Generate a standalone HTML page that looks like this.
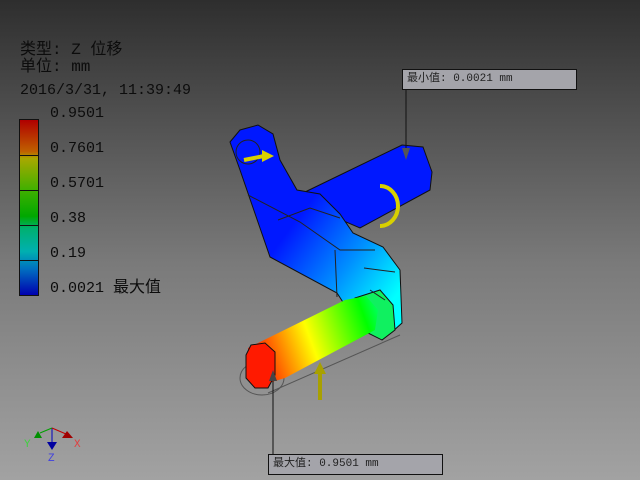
<!DOCTYPE html>
<html><head><meta charset="utf-8"><style>
html,body{margin:0;padding:0}
body{width:640px;height:480px;overflow:hidden;background:linear-gradient(#2e2e2e 0%,#4a4a4a 20%,#7a7a7a 55%,#a2a2a2 100%);position:relative;font-family:"Liberation Mono","Noto Sans CJK SC",monospace;color:#0c0c0c}
.t{position:absolute;font-size:15px;line-height:18px;white-space:nowrap}
.box{position:absolute;background:#a4a4aa;border:1px solid #111;font-size:11px;line-height:18px;padding-left:4px;box-sizing:border-box;color:#222}
</style></head><body>
<div class="t" style="left:20px;top:41px;font-size:16px">类型: Z 位移</div>
<div class="t" style="left:20px;top:59px;line-height:16px;font-size:16px">单位: mm</div>
<div class="t" style="left:20px;top:82px">2016/3/31, 11:39:49</div>
<div style="position:absolute;left:19px;top:119px;width:20px;height:177px;border:1px solid #111;box-sizing:border-box;background:linear-gradient(#b00000 0%,#c06000 18%,#a8a800 22%,#40b000 40%,#00a800 55%,#00b070 62%,#00b0b0 75%,#0070c0 85%,#0000b0 100%)">
<div style="position:absolute;left:0;right:0;top:35px;border-top:1px solid #111"></div>
<div style="position:absolute;left:0;right:0;top:70px;border-top:1px solid #111"></div>
<div style="position:absolute;left:0;right:0;top:105px;border-top:1px solid #111"></div>
<div style="position:absolute;left:0;right:0;top:140px;border-top:1px solid #111"></div>
</div>
<div class="t" style="left:50px;top:105px">0.9501</div>
<div class="t" style="left:50px;top:140px">0.7601</div>
<div class="t" style="left:50px;top:175px">0.5701</div>
<div class="t" style="left:50px;top:210px">0.38</div>
<div class="t" style="left:50px;top:245px">0.19</div>
<div class="t" style="left:50px;top:279px">0.0021 <span style="font-size:16px">最大值</span></div>

<svg width="640" height="480" style="position:absolute;left:0;top:0">
<defs>
<linearGradient id="arm" x1="300" y1="215" x2="400" y2="290" gradientUnits="userSpaceOnUse"><stop offset="0" stop-color="#0018ff"/><stop offset="0.55" stop-color="#0090ff"/><stop offset="1" stop-color="#00ffff"/></linearGradient>
<linearGradient id="sh" x1="248" y1="360" x2="385" y2="310" gradientUnits="userSpaceOnUse"><stop offset="0.05" stop-color="#ff1800"/><stop offset="0.45" stop-color="#ffff00"/><stop offset="0.85" stop-color="#00ff00"/><stop offset="1" stop-color="#00ff80"/></linearGradient>
</defs>
<g stroke="#555" fill="none" stroke-width="1">
<ellipse cx="262" cy="378" rx="22" ry="17"/>
<path d="M268 393 L400 335"/>
</g>
<polygon points="305,192 402,145 423,147 432,172 430,190 360,228 332,216" fill="#0018ff" stroke="#111"/>
<polygon points="230,142 240,130 258,125 273,134 280,160 297,190 320,194 340,214 353,233 383,247 400,270 402,323 392,332 352,316 337,293 270,257 240,170" fill="url(#arm)" stroke="#111"/>
<polygon points="355,298 380,290 393,305 395,330 382,340 362,330" fill="#10f060" stroke="#111"/>
<polygon points="248,348 345,300 366,296 378,310 375,330 285,378 262,385 250,372" fill="url(#sh)" stroke="none"/>
<polygon points="251,345 265,343 275,352 275,375 268,388 255,388 246,378 246,355" fill="#ff1a00" stroke="#111"/>
<g stroke="#222" fill="none" stroke-width="1">
<path d="M278 220 L310 208 L340 218 M248 195 L300 222 L340 250 L375 250 M335 250 L337 297 M364 268 L395 272 M370 290 L385 300"/>
<circle cx="248" cy="152" r="12"/>
</g>
<path d="M380 186 A18 20 0 0 1 380 226" stroke="#d8d000" stroke-width="4" fill="none"/>
<path d="M244 160 L264 156" stroke="#d8d000" stroke-width="4"/>
<polygon points="262,150 274,156 262,162" fill="#d8d000"/>
<path d="M320 372 L320 400" stroke="#a8a000" stroke-width="4"/>
<polygon points="314,374 320,362 326,374" fill="#a8a000"/>
<path d="M406 89 L406 158" stroke="#111"/>
<polygon points="402,148 410,148 406,160" fill="#555"/>
<path d="M273 378 L273 455" stroke="#111"/>
<polygon points="269,381 277,381 273,370" fill="#444"/>
<g transform="translate(0,400)">
<path d="M52 28 L52 44" stroke="#0000c0"/>
<path d="M52 28 L40 33" stroke="#00a000"/>
<path d="M52 28 L66 34" stroke="#c00000"/>
<polygon points="34,38 38,31 42,38" fill="#009000"/>
<polygon points="62,38 67,31 73,38" fill="#a00000"/>
<polygon points="47,42 57,42 52,50" fill="#0000a0"/>
<text x="24" y="47" fill="#40d040" font-size="11" font-family="Liberation Mono">Y</text>
<text x="74" y="47" fill="#e04040" font-size="11" font-family="Liberation Mono">X</text>
<text x="48" y="61" fill="#4040e0" font-size="11" font-family="Liberation Mono">Z</text>
</g>
</svg>
<div class="box" style="left:402px;top:69px;width:175px;height:21px">最小值: 0.0021 mm</div>
<div class="box" style="left:268px;top:454px;width:175px;height:21px">最大值: 0.9501 mm</div>
</body></html>
